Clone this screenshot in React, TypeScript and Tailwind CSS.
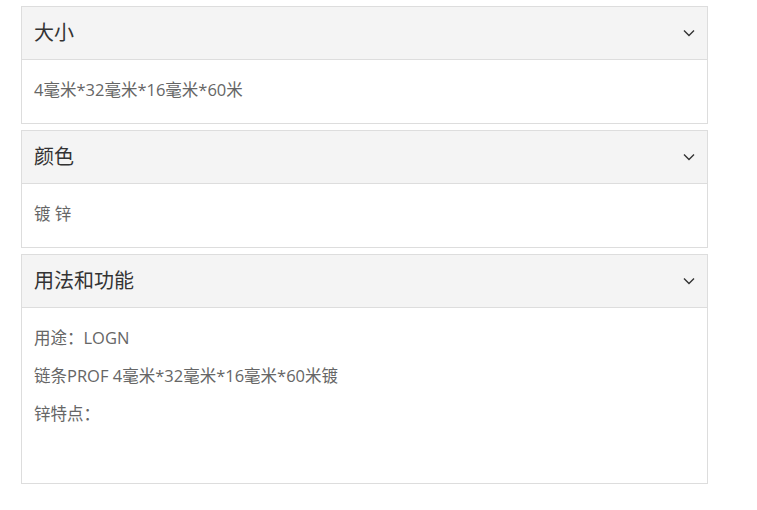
import React from 'react';

interface Panel {
  title: string;
  lines: string[];
  extra?: boolean;
}

const panels: Panel[] = [
  { title: '大小', lines: ['4毫米*32毫米*16毫米*60米'] },
  { title: '颜色', lines: ['镀 锌'] },
  {
    title: '用法和功能',
    lines: ['用途：LOGN', '链条PROF 4毫米*32毫米*16毫米*60米镀', '锌特点：'],
    extra: true,
  },
];

const Chevron = () => (
  <svg width="12" height="8" viewBox="0 0 12 8" fill="none" className="text-[#333]">
    <path d="M1 1.5 L6 6.5 L11 1.5" stroke="currentColor" strokeWidth="1.4" />
  </svg>
);

const App: React.FC = () => {
  return (
    <div
      className="w-[757px] h-[510px] bg-white pt-[6px] pl-[21px]"
      style={{ fontFamily: '"Open Sans", "Noto Sans CJK SC", sans-serif' }}
    >
      <div className="flex flex-col gap-[6px] w-[687px]">
        {panels.map((p) => (
          <div key={p.title} className="border border-[#dddddd]">
            {/* Header */}
            <div className="h-[53px] bg-[#f4f4f4] border-b border-[#dddddd] flex items-center justify-between pl-[12px] pr-[12px]">
              <span className="text-[20px] text-[#333]">{p.title}</span>
              <Chevron />
            </div>
            {/* Body */}
            <div className="pt-[18px] pb-[7px] pl-[12px] pr-[12px]">
              {p.lines.map((l, i) => (
                <p key={i} className="text-[16.5px] leading-[24px] mb-[14px] text-[#666]">
                  {l}
                </p>
              ))}
              {p.extra && <div className="h-[36px]" />}
            </div>
          </div>
        ))}
      </div>
    </div>
  );
};

export default App;
